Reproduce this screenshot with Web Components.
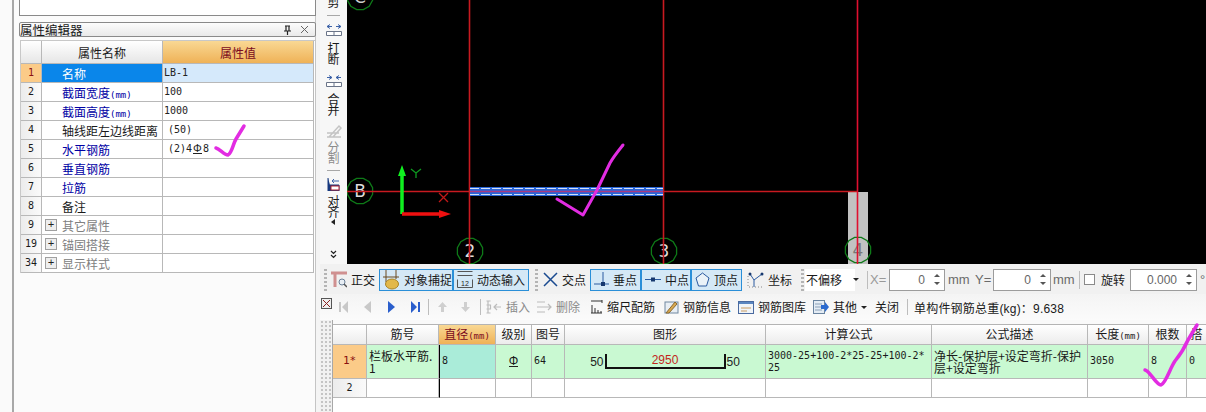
<!DOCTYPE html>
<html>
<head>
<meta charset="utf-8">
<title>属性编辑器</title>
<style>
  html, body { margin: 0; padding: 0; background: #f0f0f0; }
  body { width: 1206px; height: 412px; overflow: hidden; font-family: "Noto Sans CJK SC", "Liberation Sans", sans-serif; font-size: 12px; color: #1a1a1a; }
</style>
</head>
<body>
<cad-app></cad-app>
<script>
const CJK = `"Noto Sans CJK SC", "Liberation Sans", sans-serif`;
const MONO = `"DejaVu Sans Mono", "Noto Sans CJK SC", monospace`;

class ToolItem extends HTMLElement {
  connectedCallback() {
    if (this.shadowRoot) return;
    const root = this.attachShadow({ mode: 'open' });
    root.innerHTML = `
<style>
  :host { box-sizing: border-box; display: flex; align-items: center; gap: 4px; height: 22px; flex: none; font: 12px ${CJK}; line-height: 14px; white-space: nowrap; color: #1a1a1a; }
  :host([pressed]) { border: 1px solid #2a8fd8; background: #d4e8f6; padding-left: 3px; }
  :host([off]) { color: #8a8a8a; }
  ::slotted(svg) { flex: none; display: block; }
</style>
<slot name="icon"></slot><slot></slot>`;
  }
}
customElements.define('tool-item', ToolItem);

class SpinBox extends HTMLElement {
  connectedCallback() {
    if (this.shadowRoot) return;
    const root = this.attachShadow({ mode: 'open' });
    root.innerHTML = `
<style>
  :host { box-sizing: border-box; display: flex; align-items: center; height: 22px; flex: none; border: 1px solid #9c9c9c; background: #fff; color: #666; font: 12px "Liberation Sans", sans-serif; }
  .v { flex: 1; text-align: right; padding-right: 5px; }
  .s { width: 14px; display: flex; flex-direction: column; align-items: center; gap: 5px; }
  i { width: 0; height: 0; border: 3px solid transparent; border-top: 0; border-bottom: 3px solid #555; display: block; }
  i + i { border-bottom: 0; border-top: 3px solid #555; }
</style>
<div class="v"></div><div class="s"><i></i><i></i></div>`;
    root.querySelector('.v').textContent = this.getAttribute('value') || '';
  }
}
customElements.define('spin-box', SpinBox);

const propTemplate = document.createElement('template');
propTemplate.innerHTML = `
<style>
  :host { display: flex; flex: none; width: 320px; height: 412px; background: #f4f4f4; }
  .edge { box-sizing: border-box; width: 14px; border-right: 2px solid #a8a8a8; background: #fafafa; }
  .body { width: 302px; padding-left: 5px; box-sizing: border-box; background: #fbfbfb; border-right: 1px solid #c4c4c4; }
  .top { box-sizing: border-box; width: 297px; height: 17px; margin-top: -1px; border: 1px solid #8a8a8a; background: #fff; }
  .title { box-sizing: border-box; width: 297px; height: 15px; margin-top: 6px; padding: 0 6px 0 0; border: 1px solid #8a8a8a; border-radius: 2px; background: linear-gradient(#fdfdfd, #e9e9e9); display: flex; align-items: center; font-size: 12.5px; line-height: 13px; }
  .title b { flex: 1; font-weight: 400; }
  .title svg { display: block; margin-left: 8px; }
  .table { display: grid; grid-template-columns: 21px 121px 151px; grid-template-rows: 23px; grid-auto-rows: 19px; width: 294px; margin: 3px 0 0 1px; background: #fff; border-top: 1px solid #c8c8c8; border-left: 1px solid #c8c8c8; }
  .c { box-sizing: border-box; border-right: 1px solid #b8b8b8; border-bottom: 1px solid #b8b8b8; padding-top: 1px; line-height: 18px; font-size: 12px; white-space: nowrap; overflow: hidden; }
  .h { padding-top: 0; line-height: 23px; text-align: center; background: linear-gradient(#fff, #e6e6e6); }
  .h.on { background: linear-gradient(#f9d894, #efb257); color: #7a0a1e; }
  .n { padding-top: 0; text-align: center; font: 10px/18px ${MONO}; background: linear-gradient(90deg, #ececec, #fafafa); }
  .n.on { background: #fbcb88; color: #8a1010; }
  .k { padding-left: 20px; color: #0000a4; }
  .k.on { background: #0a86ea; color: #fff; }
  .k.plain { color: #1a1a1a; }
  .k.group { padding-left: 20px; color: #808080; position: relative; }
  .k.group::before { content: "+"; position: absolute; left: 3px; top: 3px; width: 10px; height: 10px; border: 1px solid #a0a0a0; background: #eee; color: #222; font: 11px/10px "Liberation Mono", monospace; text-align: center; }
  .v { padding: 0 0 0 1px; font: 10px/18px ${MONO}; color: #222; }
  .v.in { padding-left: 5px; }
  .v.on { background: #d5e9fb; }
  .k small { font: 9px ${MONO}; }
  .grade { display: inline-block; border-bottom: 1px solid #222; height: 9px; margin: 0 1px; font: 11px/9px "Liberation Sans", sans-serif; }
</style>
<div class="edge"></div>
<div class="body">
  <div class="top"></div>
  <div class="title"><b>属性编辑器</b>
    <svg width="9" height="10" viewBox="0 0 9 10"><path d="M2 1h5M3 1v5M6 1v5M1 6h7M4.500 6v4" fill="none" stroke="#222" stroke-width="1.200"/></svg>
    <svg width="9" height="9" viewBox="0 0 9 9"><path d="M1 1l7 7M8 1l-7 7" stroke="#666" fill="none"/></svg>
  </div>
  <div class="table"></div>
</div>`;

class PropEditor extends HTMLElement {
  connectedCallback() {
    if (this.shadowRoot) return;
    const root = this.attachShadow({ mode: 'open' });
    root.appendChild(propTemplate.content.cloneNode(true));
    const rows = [
      ['1', '名称', 'LB-1', 'on', ''],
      ['2', '截面宽度<small>(mm)</small>', '100', '', ''],
      ['3', '截面高度<small>(mm)</small>', '1000', '', ''],
      ['4', '轴线距左边线距离', '(50)', 'plain', 'in'],
      ['5', '水平钢筋', '(2)4<span class="grade">Φ</span>8', '', 'in'],
      ['6', '垂直钢筋', '', '', ''],
      ['7', '拉筋', '', '', ''],
      ['8', '备注', '', 'plain', ''],
      ['9', '其它属性', '', 'group', ''],
      ['19', '锚固搭接', '', 'group', ''],
      ['34', '显示样式', '', 'group', ''],
    ];
    let html = '<div class="c h"></div><div class="c h">属性名称</div><div class="c h on">属性值</div>';
    for (const [n, k, v, f, vf] of rows) {
      const on = f === 'on' ? ' on' : '';
      html += `<div class="c n${on}">${n}</div><div class="c k ${f}">${k}</div><div class="c v ${vf}${on}">${v}</div>`;
    }
    root.querySelector('.table').innerHTML = html;
  }
}
customElements.define('prop-editor', PropEditor);

const sideTemplate = document.createElement('template');
sideTemplate.innerHTML = `
<style>
  :host { display: flex; flex-direction: column; align-items: center; flex: none; box-sizing: border-box; width: 27px; height: 264px; background: #f7f7f7; font: 12px/11px ${CJK}; color: #1a1a1a; overflow: hidden; }
  .t { width: 12px; text-align: center; }
  .sep { width: 13px; height: 1px; background: #a8a8a8; }
  .off { color: #8c8c8c; }
  svg { display: block; flex: none; }
</style>
<div class="t" style="margin-top:-4px">剪</div>
<div class="sep" style="margin-top:8px"></div>
<svg style="margin-top:8px" width="16" height="12" viewBox="0 0 16 12"><path d="M1 2.500h5M4 .5L1 2.500l3 2M15 2.500h-5M12 .5l3 2-3 2" fill="none" stroke="#3c62a8"/><path d="M.5 7.500h15v4H.5zM8 7.500v4" fill="#fff" stroke="#6a7488"/></svg>
<div class="t" style="margin-top:6px">打断</div>
<svg style="margin-top:11px" width="16" height="12" viewBox="0 0 16 12"><path d="M1 2.500h5M3 .5l3 2-3 2M15 2.500h-5M13 .5l-3 2 3 2" fill="none" stroke="#3c62a8"/><path d="M.5 7.500h15v4H.5zM8 7.500v4" fill="#fff" stroke="#6a7488"/></svg>
<div class="t" style="margin-top:6px">合并</div>
<svg style="margin-top:9px" width="16" height="15" viewBox="0 0 16 15"><path d="M1 13h14M1 9h12M3 13l10-11 2 2-8 9" fill="none" stroke="#c4c4c4" stroke-width="1.500"/></svg>
<div class="t off" style="margin-top:2px">分割</div>
<div class="sep" style="margin-top:7px"></div>
<svg style="margin-top:7px" width="13" height="13" viewBox="0 0 13 13"><path d="M1 0v13h11V7H3" fill="#16387e" stroke="#16387e"/><rect x="4" y="8" width="8" height="4" fill="#fff" stroke="#b02030"/><path d="M12 3H5M7 1L5 3l2 2" fill="none" stroke="#3c62a8"/></svg>
<div class="t" style="margin-top:4px">对齐</div>
<svg style="margin-top:2px" width="5" height="6" viewBox="0 0 5 6"><path d="M4 0v6L0 3z" fill="#222"/></svg>
<svg style="margin-top:25px" width="7" height="9" viewBox="0 0 7 9"><path d="M1 1l2.500 2.500L6 1M1 5l2.500 2.500L6 5" fill="none" stroke="#222" stroke-width="1.200"/></svg>`;

class SideTools extends HTMLElement {
  connectedCallback() {
    if (this.shadowRoot) return;
    this.attachShadow({ mode: 'open' }).appendChild(sideTemplate.content.cloneNode(true));
  }
}
customElements.define('side-tools', SideTools);

function bubble(cx, cy, label, fill) {
  const pts = [];
  for (let i = 0; i < 12; i++) {
    const a = (Math.PI * 2 * i) / 12 + 0.26;
    pts.push((cx + 13 * Math.cos(a)).toFixed(1) + ',' + (cy + 13 * Math.sin(a)).toFixed(1));
  }
  return `<polygon points="${pts.join(' ')}" fill="none" stroke="#0e7a18" stroke-width="1.300"/>
  <text x="${cx}" y="${cy + 6}" text-anchor="middle" font-family="DejaVu Sans" font-size="17" fill="${fill}">${label}</text>`;
}

class CadView extends HTMLElement {
  connectedCallback() {
    if (this.shadowRoot) return;
    const root = this.attachShadow({ mode: 'open' });
    root.innerHTML = `
<style>
  :host { display: block; flex: 1 1 auto; height: 264px; background: #000; overflow: hidden; }
  svg { display: block; }
</style>
<svg width="859" height="264" viewBox="347 0 859 264">
  <rect x="848" y="192" width="20" height="72" fill="#c2c2c2"/>
  ${bubble(360, -3, 'C', '#ccc')}
  ${bubble(360, 191, 'B', '#ddd')}
  ${bubble(470, 251, '2', '#ddd')}
  ${bubble(664, 251, '3', '#ddd')}
  ${bubble(858, 250, '4', '#777')}
  <path d="M347 191.500H857M469.500 0V264M663.500 0V264" stroke="#c81a20" stroke-width="1.600" fill="none"/>
  <path d="M857.500 0V264" stroke="#e01030" stroke-width="1.600" fill="none"/>
  <rect x="470" y="187" width="193" height="9" fill="#2a66d8"/>
  <path d="M470 191.500H663" stroke="#a83a80" stroke-width="1.600"/>
  <path d="M470 188.500H663M470 194.500H663" stroke="#fff" stroke-width=".8" stroke-dasharray="9 2"/>
  <path d="M402 214V172" stroke="#10f020" stroke-width="3.500"/>
  <path d="M402 165l-4 11h8z" fill="#10f020"/>
  <path d="M402 214H441" stroke="#f01010" stroke-width="3.500"/>
  <path d="M451 214l-12-4v8z" fill="#f01010"/>
  <path d="M411 169l5 4 5-4M416 173v5" stroke="#0e9a20" stroke-width="1.300" fill="none"/>
  <path d="M439 193l9 9M448 193l-9 9" stroke="#c01818" stroke-width="1.300" fill="none"/>
</svg>`;
  }
}
customElements.define('cad-view', CadView);

const snapTemplate = document.createElement('template');
snapTemplate.innerHTML = `
<style>
  :host { display: flex; align-items: center; box-sizing: border-box; height: 30px; padding-top: 1px; background: #f1f1f1; font: 12px ${CJK}; color: #1a1a1a; white-space: nowrap; }
  .grip { flex: none; width: 3px; height: 22px; background: repeating-linear-gradient(#b4b4b4 0 2px, transparent 2px 4px); }
  .sep { flex: none; width: 1px; height: 18px; background: #bdbdbd; }
  .lbl { flex: none; color: #6a6a6a; font: 13px "Liberation Sans", sans-serif; }
  .combo { flex: none; box-sizing: border-box; width: 50px; height: 22px; line-height: 22px; background: #fff; padding-left: 1px; }
  .arrow { flex: none; width: 0; height: 0; border: 3px solid transparent; border-bottom: 0; border-top: 3px solid #222; }
  .check { flex: none; box-sizing: border-box; width: 11px; height: 11px; border: 1px solid #8a8a8a; background: #fff; }
</style>
<div class="grip" style="margin-left:4px"></div>
<tool-item style="margin-left:4px;width:46px"><svg slot="icon" width="16" height="18" viewBox="0 0 16 18"><path d="M0 2h16M4 2v14" stroke="#d09090" stroke-width="3" fill="none"/><circle cx="11" cy="11" r="3" fill="#e8eef4" stroke="#6a8098"/><path d="M13 13l3 3" stroke="#555" stroke-width="1.500"/></svg>正交</tool-item>
<tool-item pressed style="margin-left:2px;width:74px"><svg slot="icon" width="17" height="20" viewBox="0 0 17 20"><path d="M3 0v12M0 7h16M13 0v9" stroke="#6a4a20" fill="none"/><ellipse cx="9" cy="14" rx="6.500" ry="5" fill="#e2b84a" stroke="#a88428"/></svg>对象捕捉</tool-item>
<tool-item pressed style="width:76px"><svg slot="icon" width="16" height="17" viewBox="0 0 16 17"><path d="M.5.5h15M.5 4.500h15M.5 8.500v8h15v-8" fill="none" stroke="#555"/><text x="8" y="15" text-anchor="middle" font-family="Liberation Sans" font-size="7" fill="#222">12</text></svg>动态输入</tool-item>
<div class="grip" style="margin-left:6px"></div>
<tool-item style="margin-left:5px;width:45px"><svg slot="icon" width="15" height="15" viewBox="0 0 15 15"><path d="M1 1l13 13M14 1L1 14" stroke="#1a4a90" stroke-width="1.500"/></svg>交点</tool-item>
<tool-item pressed style="margin-left:2px;width:51px"><svg slot="icon" width="15" height="15" viewBox="0 0 15 15"><path d="M0 12h15M9 0v12" stroke="#2a5aa0" fill="none"/><rect x="7" y="10" width="4" height="4" fill="#16386e"/></svg>垂点</tool-item>
<tool-item pressed style="width:50px"><svg slot="icon" width="16" height="9" viewBox="0 0 16 9"><path d="M0 4.500h16" stroke="#2a5aa0"/><rect x="6" y="2.500" width="4" height="4" fill="#16386e"/></svg>中点</tool-item>
<tool-item pressed style="width:51px"><svg slot="icon" width="15" height="15" viewBox="0 0 15 15"><path d="M7.500 1L14 6l-2.500 8h-8L1 6z" fill="#eaf2f8" stroke="#2a5aa0"/></svg>顶点</tool-item>
<tool-item style="margin-left:5px;width:45px"><svg slot="icon" width="17" height="17" viewBox="0 0 17 17"><path d="M3 3l4 6v7M15 3l-8 6" stroke="#2a5aa0" fill="none"/><path d="M1 5v11h15" stroke="#888" stroke-dasharray="1 2" fill="none"/><circle cx="3" cy="3" r="1.500" fill="#16386e"/><circle cx="15" cy="3" r="1.500" fill="#16386e"/></svg>坐标</tool-item>
<div class="grip" style="margin-left:9px"></div>
<div class="combo" style="margin-left:1px">不偏移</div>
<div class="arrow" style="margin:0 0 0 -2px"></div>
<div style="flex:none;width:5px"></div>
<div class="sep" style="margin-left:3px"></div>
<div class="lbl" style="margin-left:2px;width:18px;color:#999">X=</div>
<spin-box value="0" style="margin-left:1px;width:56px"></spin-box>
<div class="lbl" style="margin-left:3px;width:22px">mm</div>
<div class="lbl" style="margin-left:5px;width:17px">Y=</div>
<spin-box value="0" style="margin-left:1px;width:58px"></spin-box>
<div class="lbl" style="margin-left:2px;width:22px">mm</div>
<div class="sep" style="margin-left:4px"></div>
<div class="check" style="margin-left:4px"></div>
<div style="flex:none;margin-left:6px;width:26px">旋转</div>
<spin-box value="0.000" style="margin-left:3px;width:67px"></spin-box>
<div class="lbl" style="margin-left:3px">°</div>`;

class SnapBar extends HTMLElement {
  connectedCallback() {
    if (this.shadowRoot) return;
    this.attachShadow({ mode: 'open' }).appendChild(snapTemplate.content.cloneNode(true));
  }
}
customElements.define('snap-bar', SnapBar);

const rebarBarTemplate = document.createElement('template');
rebarBarTemplate.innerHTML = `
<style>
  :host { display: flex; align-items: center; box-sizing: border-box; height: 26px; background: linear-gradient(#f4f4f4, #fbfbfb); font: 12px ${CJK}; white-space: nowrap; }
  .sep { flex: none; width: 1px; height: 16px; background: #bdbdbd; }
  .nav { flex: none; width: 24px; height: 16px; display: flex; justify-content: center; align-items: center; }
  .close { flex: none; width: 10px; margin-left: 1px; margin-top: -8px; }
  svg { display: block; }
  tool-item { height: 18px; }
  .arrow { flex: none; width: 0; height: 0; margin-left: 4px; border: 3px solid transparent; border-bottom: 0; border-top: 3px solid #222; }
  .total { flex: none; margin-left: 6px; font: 12px "Liberation Sans", ${CJK}; letter-spacing: .2px; }
</style>
<div class="close"><svg width="11" height="11" viewBox="0 0 11 11"><rect x=".5" y=".5" width="10" height="10" fill="#eee" stroke="#555"/><path d="M2 2l7 7M9 2l-7 7" stroke="#8a2020"/></svg></div>
<div class="nav"><svg width="9" height="12" viewBox="0 0 9 12"><path d="M0 1h2v10H0zM9 0v12L3 6z" fill="#c8c8c8"/></svg></div>
<div class="nav"><svg width="7" height="12" viewBox="0 0 7 12"><path d="M7 0v12L0 6z" fill="#c8c8c8"/></svg></div>
<div class="nav"><svg width="7" height="12" viewBox="0 0 7 12"><path d="M0 0v12l7-6z" fill="#2a5ecc"/></svg></div>
<div class="nav"><svg width="9" height="12" viewBox="0 0 9 12"><path d="M0 0v12l6-6zM7 1h2v10H7z" fill="#2a5ecc"/></svg></div>
<div class="sep" style="margin-left:1px"></div>
<div class="nav" style="margin-left:1px"><svg width="9" height="10" viewBox="0 0 9 10"><path d="M4.500 0L9 5H6v5H3V5H0z" fill="#cfcfcf"/></svg></div>
<div class="nav" style="width:23px"><svg width="9" height="10" viewBox="0 0 9 10"><path d="M4.500 10L9 5H6V0H3v5H0z" fill="#cfcfcf"/></svg></div>
<div class="sep" style="margin-left:3px"></div>
<tool-item off style="margin-left:5px;width:43px"><svg slot="icon" width="16" height="14" viewBox="0 0 16 14"><path d="M.5 1h4M.5 5h4v4h-4M.5 13h4M2 1v12M15 7H8M11 4L8 7l3 3" fill="none" stroke="#bcbcbc" stroke-width="1.200"/></svg>插入</tool-item>
<tool-item off style="margin-left:7px;width:45px"><svg slot="icon" width="16" height="14" viewBox="0 0 16 14"><path d="M1 2h8M1 7h8M1 12h8M8 7h7M12 4l3 3-3 3" fill="none" stroke="#bcbcbc" stroke-width="1.200"/></svg>删除</tool-item>
<tool-item style="margin-left:9px;width:66px"><svg slot="icon" width="13" height="14" viewBox="0 0 13 14"><path d="M1 1h11M12 0v3M1 13h11M2 5v8M5 8v5M8 10v3M11 11v2" stroke="#333" fill="none"/></svg>缩尺配筋</tool-item>
<tool-item style="margin-left:8px;width:68px"><svg slot="icon" width="15" height="14" viewBox="0 0 15 14"><rect x="1" y="2" width="13" height="11" fill="#e8eef4" stroke="#7088a0"/><path d="M2 13L11 2l2 2-8 9z" fill="#d8a850" stroke="#8a6a30"/></svg>钢筋信息</tool-item>
<tool-item style="margin-left:6px;width:68px"><svg slot="icon" width="16" height="13" viewBox="0 0 16 13"><rect x=".5" y=".5" width="15" height="12" fill="#f0f4f8" stroke="#4a6aa0"/><path d="M1 1h14v2H1z" fill="#5a86c0"/><path d="M3 7h10M3 10h6" stroke="#c89a60"/></svg>钢筋图库</tool-item>
<tool-item style="margin-left:7px;width:44px"><svg slot="icon" width="16" height="14" viewBox="0 0 16 14"><rect x=".5" y=".5" width="11" height="13" fill="#e4ecf4" stroke="#6a84a0"/><path d="M2 4h7M2 7h7M2 10h7" stroke="#8aa0b8"/><path d="M8 5h4V2l4 5-4 5V9H8z" fill="#2a6ad0"/></svg>其他</tool-item>
<div class="arrow"></div>
<tool-item style="margin-left:8px;width:24px">关闭</tool-item>
<div class="sep" style="margin-left:8px"></div>
<div class="total">单构件钢筋总重(kg)：9.638</div>`;

class RebarBar extends HTMLElement {
  connectedCallback() {
    if (this.shadowRoot) return;
    this.attachShadow({ mode: 'open' }).appendChild(rebarBarTemplate.content.cloneNode(true));
  }
}
customElements.define('rebar-bar', RebarBar);

const gridTemplate = document.createElement('template');
gridTemplate.innerHTML = `
<style>
  :host { display: flex; flex: 1 1 auto; min-height: 0; background: #f4f4f4; font: 12px ${CJK}; color: #1a1a1a; }
  .grip { flex: none; width: 12px; background-color: #f1f1f1; background-image: radial-gradient(#c4c4c4 1px, transparent 1.500px); background-size: 4px 4px; border-right: 1px solid #a8a8a8; }
  .wrap { flex: 1; min-width: 0; padding-top: 4px; background: linear-gradient(#f9f9f9 4px, #fff 4px); }
  .grid { display: grid; grid-template-columns: 34px 72px 57px 36px 33px 201px 166px 156px 61px 38px 20px; grid-template-rows: 20px 34px 19px; border-top: 1px solid #b4b4b4; width: 874px; background: #fff; }
  .c { box-sizing: border-box; border-right: 1px solid #b8b8b8; border-bottom: 1px solid #b8b8b8; overflow: hidden; white-space: nowrap; }
  .h { text-align: center; line-height: 18px; background: linear-gradient(#fff, #ececec); }
  .h.on { background: linear-gradient(#f9d894, #efb257); color: #7a0a1e; }
  .h small { font: 9px ${MONO}; }
  .n { text-align: center; font: 11px/32px ${MONO}; background: #fbcb88; color: #8a1010; }
  .n2 { text-align: center; font: 10px/18px ${MONO}; background: linear-gradient(90deg, #ececec, #fafafa); }
  .r { background: #c9f9d2; }
  .m { font: 10px/32px ${MONO}; padding-left: 2px; }
  .w { white-space: normal; line-height: 11.500px; padding: 5px 0 0 2px; word-break: break-all; }
  .w.f { font: 10px/12px ${MONO}; }
  .focus { background: #aaecd9; border-left: 1px solid #000; }
  .blank-f { border-left: 1px solid #000; }
  .grade { display: inline-block; border-bottom: 1px solid #222; height: 9px; font: 12px/9px "Liberation Sans", sans-serif; }
  .shape { display: flex; align-items: center; justify-content: center; font: 12px "Liberation Sans", sans-serif; color: #222; }
  .bar { box-sizing: border-box; width: 121px; height: 15px; margin: 0 1px; border: solid #111; border-width: 0 2px 2px 2px; text-align: center; color: #c4261c; line-height: 13px; font-size: 12px; }
</style>
<div class="grip"></div>
<div class="wrap">
  <div class="grid">
    <div class="c h"></div><div class="c h">筋号</div><div class="c h on">直径<small>(mm)</small></div><div class="c h">级别</div><div class="c h">图号</div><div class="c h">图形</div><div class="c h">计算公式</div><div class="c h">公式描述</div><div class="c h">长度<small>(mm)</small></div><div class="c h">根数</div><div class="c h">搭</div>
    <div class="c n">1*</div>
    <div class="c r w">栏板水平筋.1</div>
    <div class="c m focus">8</div>
    <div class="c r" style="text-align:center;line-height:30px"><span class="grade">Φ</span></div>
    <div class="c r m">64</div>
    <div class="c r shape"><span>50</span><div class="bar">2950</div><span>50</span></div>
    <div class="c r w f">3000-25+100-2*25-25+100-2*<br>25</div>
    <div class="c r w">净长-保护层+设定弯折-保护层+设定弯折</div>
    <div class="c r m">3050</div>
    <div class="c r m">8</div>
    <div class="c r m">0</div>
    <div class="c n2">2</div><div class="c"></div><div class="c blank-f"></div><div class="c"></div><div class="c"></div><div class="c"></div><div class="c"></div><div class="c"></div><div class="c"></div><div class="c"></div><div class="c"></div>
  </div>
</div>`;

class RebarGrid extends HTMLElement {
  connectedCallback() {
    if (this.shadowRoot) return;
    this.attachShadow({ mode: 'open' }).appendChild(gridTemplate.content.cloneNode(true));
  }
}
customElements.define('rebar-grid', RebarGrid);

const appTemplate = document.createElement('template');
appTemplate.innerHTML = `
<style>
  :host { display: flex; position: relative; width: 1206px; height: 412px; overflow: hidden; }
  .main { display: flex; flex-direction: column; width: 886px; height: 412px; overflow: hidden; }
  .top { display: flex; flex: none; height: 264px; }
  .ink { position: absolute; left: 0; top: 0; pointer-events: none; }
  .ink path { fill: none; stroke: #e22ce2; stroke-linecap: round; stroke-linejoin: round; }
</style>
<prop-editor></prop-editor>
<div class="main">
  <div class="top"><side-tools></side-tools><cad-view></cad-view></div>
  <snap-bar></snap-bar>
  <rebar-bar></rebar-bar>
  <rebar-grid></rebar-grid>
</div>
<svg class="ink" width="1206" height="412" viewBox="0 0 1206 412">
  <path stroke-width="3.500" d="M216 148C220 149 224 155 228 155C232 153 233 144 236 139L244 126"/>
  <path stroke-width="3" d="M557 199L583 215L597 190L610 163C614 156 619 150 623 145"/>
  <path stroke-width="3.500" d="M1145 370C1150 371 1156 385 1161 385C1166 383 1170 368 1175 361C1180 355 1184 349 1188 340L1197 325"/>
</svg>`;

class CadApp extends HTMLElement {
  connectedCallback() {
    if (this.shadowRoot) return;
    this.attachShadow({ mode: 'open' }).appendChild(appTemplate.content.cloneNode(true));
  }
}
customElements.define('cad-app', CadApp);
</script>
</body>
</html>
